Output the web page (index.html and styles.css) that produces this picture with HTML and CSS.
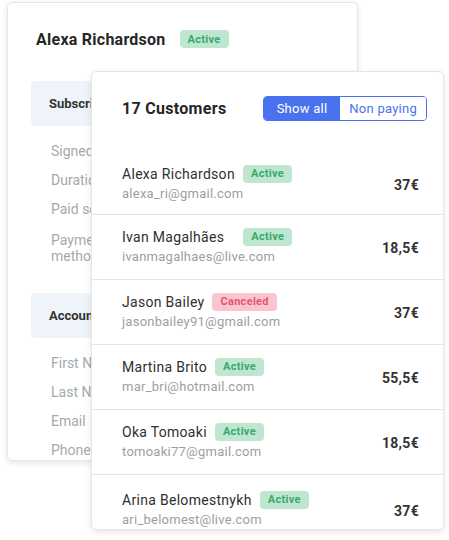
FILE: index.html
```html
<!DOCTYPE html>
<html>
<head>
<meta charset="utf-8">
<link rel="stylesheet" href="styles.css">
</head>
<body>
<div class="canvas">
  <div class="card back">
    <div class="back-head">
      <h2 class="back-title">Alexa Richardson</h2>
      <span class="badge active">Active</span>
    </div>
    <div class="section first">Subscription</div>
    <ul class="fields">
      <li>Signed up</li>
      <li>Duration</li>
      <li>Paid so far</li>
      <li class="two">Payment<br>method</li>
    </ul>
    <div class="section">Account</div>
    <ul class="fields">
      <li>First Name</li>
      <li>Last Name</li>
      <li>Email</li>
      <li>Phone</li>
    </ul>
  </div>

  <div class="card front">
    <div class="front-head">
      <h2 class="front-title">17 Customers</h2>
      <div class="toggle">
        <span class="opt on">Show all</span>
        <span class="opt">Non paying</span>
      </div>
    </div>
    <ul class="rows">
      <li class="row">
        <div class="who">
          <div class="name"><span>Alexa Richardson</span><span class="badge active">Active</span></div>
          <div class="email">alexa_ri@gmail.com</div>
        </div>
        <div class="price">37€</div>
      </li>
      <li class="row">
        <div class="who">
          <div class="name"><span>Ivan Magalhães</span><span class="badge active wide-gap">Active</span></div>
          <div class="email">ivanmagalhaes@live.com</div>
        </div>
        <div class="price">18,5€</div>
      </li>
      <li class="row">
        <div class="who">
          <div class="name"><span>Jason Bailey</span><span class="badge canceled">Canceled</span></div>
          <div class="email">jasonbailey91@gmail.com</div>
        </div>
        <div class="price">37€</div>
      </li>
      <li class="row">
        <div class="who">
          <div class="name"><span>Martina Brito</span><span class="badge active">Active</span></div>
          <div class="email">mar_bri@hotmail.com</div>
        </div>
        <div class="price">55,5€</div>
      </li>
      <li class="row">
        <div class="who">
          <div class="name"><span>Oka Tomoaki</span><span class="badge active">Active</span></div>
          <div class="email">tomoaki77@gmail.com</div>
        </div>
        <div class="price">18,5€</div>
      </li>
      <li class="row last">
        <div class="who">
          <div class="name"><span>Arina Belomestnykh</span><span class="badge active">Active</span></div>
          <div class="email">ari_belomest@live.com</div>
        </div>
        <div class="price">37€</div>
      </li>
    </ul>
  </div>
</div>
</body>
</html>
```

FILE: styles.css
```css
* { box-sizing: border-box; }
html, body {
  margin: 0;
  padding: 0;
  background: #ffffff;
  font-family: Roboto, "Liberation Sans", sans-serif;
  color: #2b2b2b;
}
ul { list-style: none; margin: 0; padding: 0; }
h2 { margin: 0; }

.canvas {
  position: relative;
  width: 449px;
  height: 540px;
  overflow: hidden;
}

.card {
  position: absolute;
  background: #fff;
  border: 1px solid #e6e6e6;
  border-radius: 5px;
  box-shadow: 0 2px 6px rgba(0,0,0,0.10);
  overflow: hidden;
}

/* back card */
.back {
  left: 7px;
  top: 2px;
  width: 351px;
  height: 459px;
  padding: 26px 0 0 23px;
}
.back-head {
  display: flex;
  align-items: center;
  gap: 14px;
  padding-left: 5px;
  height: 20px;
}
.back-title {
  font-size: 16px;
  font-weight: 700;
  color: #262626;
  letter-spacing: 0.25px;
}
.section {
  width: 300px;
  height: 45px;
  background: #eff4fb;
  border-radius: 4px;
  padding-left: 18px;
  display: flex;
  align-items: center;
  font-size: 13px;
  font-weight: 700;
  color: #333;
}
.section.first { margin-top: 32px; }
.fields { padding: 16px 0 0 20px; }
.fields li {
  font-size: 14px;
  color: #a3aaad;
  line-height: 16px;
  height: 29px;
  padding-top: 1px;
}
.fields li.two { height: 64px; padding-top: 3px; }

/* badges */
.badge {
  display: inline-flex;
  align-items: center;
  height: 18px;
  padding: 0 8px;
  border-radius: 4px;
  font-size: 11px;
  font-weight: 700;
  letter-spacing: 0.3px;
}
.badge.active { background: #bfe6d0; color: #39a96b; }
.badge.canceled { background: #f9c5d0; color: #e9546f; }

/* front card */
.front {
  left: 91px;
  top: 71px;
  width: 353px;
  height: 459px;
}
.front-head {
  display: flex;
  align-items: center;
  justify-content: space-between;
  height: 77px;
  padding: 0 16px 4px 30px;
}
.front-title {
  font-size: 16px;
  font-weight: 700;
  color: #262626;
  letter-spacing: 0.3px;
}
.toggle {
  display: flex;
  border: 1px solid #4a72ee;
  border-radius: 4px;
  overflow: hidden;
  height: 25px;
}
.opt {
  display: flex;
  align-items: center;
  font-size: 13px;
  color: #4a72ee;
  padding: 0 9px;
  background: #fff;
  letter-spacing: 0.25px;
}
.opt.on {
  background: #4a72ee;
  color: #fff;
  padding: 0 13px 0 13px;
}

.row {
  display: flex;
  align-items: center;
  justify-content: space-between;
  height: 65px;
  padding: 0 24px 0 30px;
  border-bottom: 1px solid #e4e4e4;
}
.row:first-child { height: 66px; padding-top: 4px; }
.row.last { border-bottom: none; padding-top: 4px; }
.name {
  display: flex;
  align-items: center;
  gap: 8px;
  font-size: 14px;
  color: #2f2f2f;
  line-height: 20px;
  letter-spacing: 0.3px;
}
.name .badge.wide-gap { margin-left: 11px; }
.email {
  font-size: 13px;
  color: #9e9e9e;
  line-height: 20px;
  letter-spacing: 0.25px;
}
.price {
  font-size: 14px;
  font-weight: 700;
  color: #333;
  letter-spacing: 0.3px;
  padding-top: 2px;
}
```
